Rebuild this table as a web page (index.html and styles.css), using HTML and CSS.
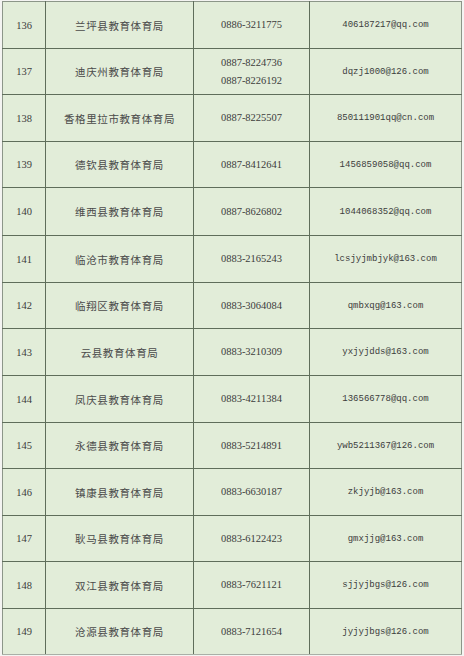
FILE: index.html
```html
<!DOCTYPE html>
<html lang="zh">
<head>
<meta charset="utf-8">
<link rel="stylesheet" href="styles.css">
</head>
<body>
<table class="list">
<colgroup><col class="c1"><col class="c2"><col class="c3"><col class="c4"></colgroup>
<tr class="r47"><td class="num">136</td><td class="name">兰坪县教育体育局</td><td class="tel">0886-3211775</td><td class="mail">406187217@qq.com</td></tr>
<tr class="r46"><td class="num">137</td><td class="name">迪庆州教育体育局</td><td class="tel two">0887-8224736<br>0887-8226192</td><td class="mail">dqzj1000@126.com</td></tr>
<tr class="r47"><td class="num">138</td><td class="name">香格里拉市教育体育局</td><td class="tel">0887-8225507</td><td class="mail">850111901qq@cn.com</td></tr>
<tr class="r46"><td class="num">139</td><td class="name">德钦县教育体育局</td><td class="tel">0887-8412641</td><td class="mail">1456859058@qq.com</td></tr>
<tr class="r48"><td class="num">140</td><td class="name">维西县教育体育局</td><td class="tel">0887-8626802</td><td class="mail">1044068352@qq.com</td></tr>
<tr class="r47"><td class="num">141</td><td class="name">临沧市教育体育局</td><td class="tel">0883-2165243</td><td class="mail">lcsjyjmbjyk@163.com</td></tr>
<tr class="r46"><td class="num">142</td><td class="name">临翔区教育体育局</td><td class="tel">0883-3064084</td><td class="mail">qmbxqg@163.com</td></tr>
<tr class="r47"><td class="num">143</td><td class="name">云县教育体育局</td><td class="tel">0883-3210309</td><td class="mail">yxjyjdds@163.com</td></tr>
<tr class="r47"><td class="num">144</td><td class="name">凤庆县教育体育局</td><td class="tel">0883-4211384</td><td class="mail">136566778@qq.com</td></tr>
<tr class="r46"><td class="num">145</td><td class="name">永德县教育体育局</td><td class="tel">0883-5214891</td><td class="mail">ywb5211367@126.com</td></tr>
<tr class="r47"><td class="num">146</td><td class="name">镇康县教育体育局</td><td class="tel">0883-6630187</td><td class="mail">zkjyjb@163.com</td></tr>
<tr class="r46"><td class="num">147</td><td class="name">耿马县教育体育局</td><td class="tel">0883-6122423</td><td class="mail">gmxjjg@163.com</td></tr>
<tr class="r47"><td class="num">148</td><td class="name">双江县教育体育局</td><td class="tel">0883-7621121</td><td class="mail">sjjyjbgs@126.com</td></tr>
<tr class="r46"><td class="num">149</td><td class="name">沧源县教育体育局</td><td class="tel">0883-7121654</td><td class="mail">jyjyjbgs@126.com</td></tr>
</table>
</body>
</html>
```
FILE: styles.css
```css
html, body {
  margin: 0;
  padding: 0;
  background: #f4f4f2;
}
body {
  padding: 1px 0 0 2px;
}
.list {
  border-collapse: collapse;
  table-layout: fixed;
  width: 459px;
  background: #e2edd9;
  border: 1px solid #8c9689;
  color: #3c3c3c;
}
.c1 { width: 43px; }
.c2 { width: 148px; }
.c3 { width: 116px; }
.c4 { width: 152px; }
.list td {
  border: 1px solid #5f6e5b;
  padding: 0;
  text-align: center;
  vertical-align: middle;
  font-family: "Liberation Serif", serif;
  font-size: 10.5px;
}
.list tr td:first-child { border-left-color: #8c9689; }
.list tr td:last-child { border-right-color: #8c9689; }
.list tr:first-child td { border-top-color: #8c9689; }
.list tr:last-child td { border-bottom-color: #a9b0a7; }
.r46 { height: 46px; }
.r47 { height: 47px; }
.r48 { height: 48px; }
.num { font-size: 10.5px; }
.name {
  font-family: "Noto Sans CJK SC", sans-serif !important;
  font-size: 10.5px !important;
  letter-spacing: 0.6px;
  color: #4a4a4a;
}
.tel { line-height: 18px; }
.mail {
  font-family: "Liberation Mono", monospace !important;
  font-size: 9px !important;
}
```
